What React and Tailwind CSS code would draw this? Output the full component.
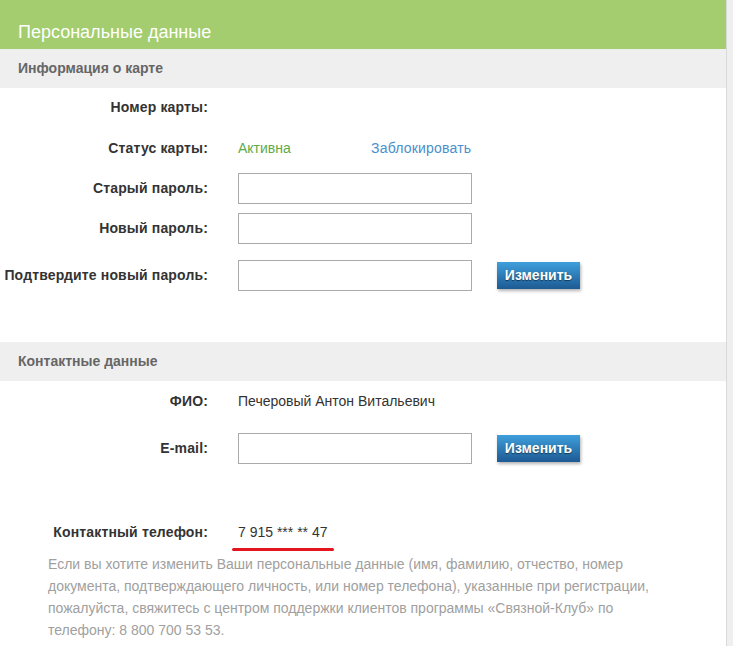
import React from 'react';

const labelCls = "w-[208px] shrink-0 text-right text-[14px] font-bold tracking-[0.15px] text-[#333]";
const inputCls = "w-[234px] h-[31px] border border-[#aaa] bg-white px-2 text-[14px] outline-none";

const Button = () => (
    <button
        type="button"
        className="ml-[25px] w-[83px] h-[27px] bg-gradient-to-b from-[#3fa0dc] to-[#1d5a93] text-white text-[14px] font-bold [text-shadow:0_1px_1px_rgba(0,0,0,0.5)] shadow-[1px_2px_3px_rgba(0,0,0,0.3)]"
    >
        Изменить
    </button>
);

const Row = ({ label, className = '', children }) => (
    <div className={`flex items-center h-[30px] ${className}`}>
        <div className={labelCls}>{label}</div>
        <div className="flex items-center ml-[30px]">{children}</div>
    </div>
);

const App = () => {
    return (
        <div className="min-h-[646px] bg-[#efefef] font-['Liberation_Sans',Arial,sans-serif]">
            <div className="w-[727px] min-h-[646px] bg-white border-r border-[#d9d9d9]">
                {/* шапка */}
                <div className="h-[49px] bg-[#a3cd6e] flex items-end pb-[8px] pl-[18px]">
                    <h1 className="text-[18px] text-white leading-none">Персональные данные</h1>
                </div>

                <div className="h-[39px] bg-[#efefef] flex items-center pl-[18px]">
                    <h2 className="text-[14px] font-bold text-[#666]">Информация о карте</h2>
                </div>

                <Row label="Номер карты:" className="mt-[4px]" />
                <Row label="Статус карты:" className="mt-[11px]">
                    <span className="text-[14px] text-[#5dab49] w-[133px]">Активна</span>
                    <a href="#" className="text-[14px] tracking-[0.2px] text-[#4a8fcc]">Заблокировать</a>
                </Row>
                <Row label="Старый пароль:" className="mt-[10px]">
                    <input className={inputCls} type="password" />
                </Row>
                <Row label="Новый пароль:" className="mt-[10px]">
                    <input className={inputCls} type="password" />
                </Row>
                <Row label="Подтвердите новый пароль:" className="mt-[17px]">
                    <input className={inputCls} type="password" />
                    <Button />
                </Row>

                <div className="mt-[52px] h-[39px] bg-[#efefef] flex items-center pl-[18px]">
                    <h2 className="text-[14px] font-bold text-[#666]">Контактные данные</h2>
                </div>

                <Row label="ФИО:" className="mt-[5px]">
                    <span className="text-[14px] text-[#333]">Печеровый Антон Витальевич</span>
                </Row>
                <Row label="E-mail:" className="mt-[17px]">
                    <input className={inputCls} type="text" />
                    <Button />
                </Row>

                <Row label="Контактный телефон:" className="mt-[54px]">
                    <span className="relative text-[14px] text-[#333]">
                        7 915 *** ** 47
                        <span className="absolute -left-[6px] -right-[6px] top-[26px] h-[3px] rounded-full bg-[#e3161f]"></span>
                    </span>
                </Row>

                <p className="mt-[6px] pl-[48px] w-[680px] text-[14px] leading-[22px] text-[#a0a0a0]">
                    Если вы хотите изменить Ваши персональные данные (имя, фамилию, отчество, номер документа, подтверждающего личность, или номер телефона), указанные при регистрации, пожалуйста, свяжитесь с центром поддержки клиентов программы «Связной-Клуб» по телефону: 8 800 700 53 53.
                </p>
            </div>
        </div>
    );
};

export default App;
